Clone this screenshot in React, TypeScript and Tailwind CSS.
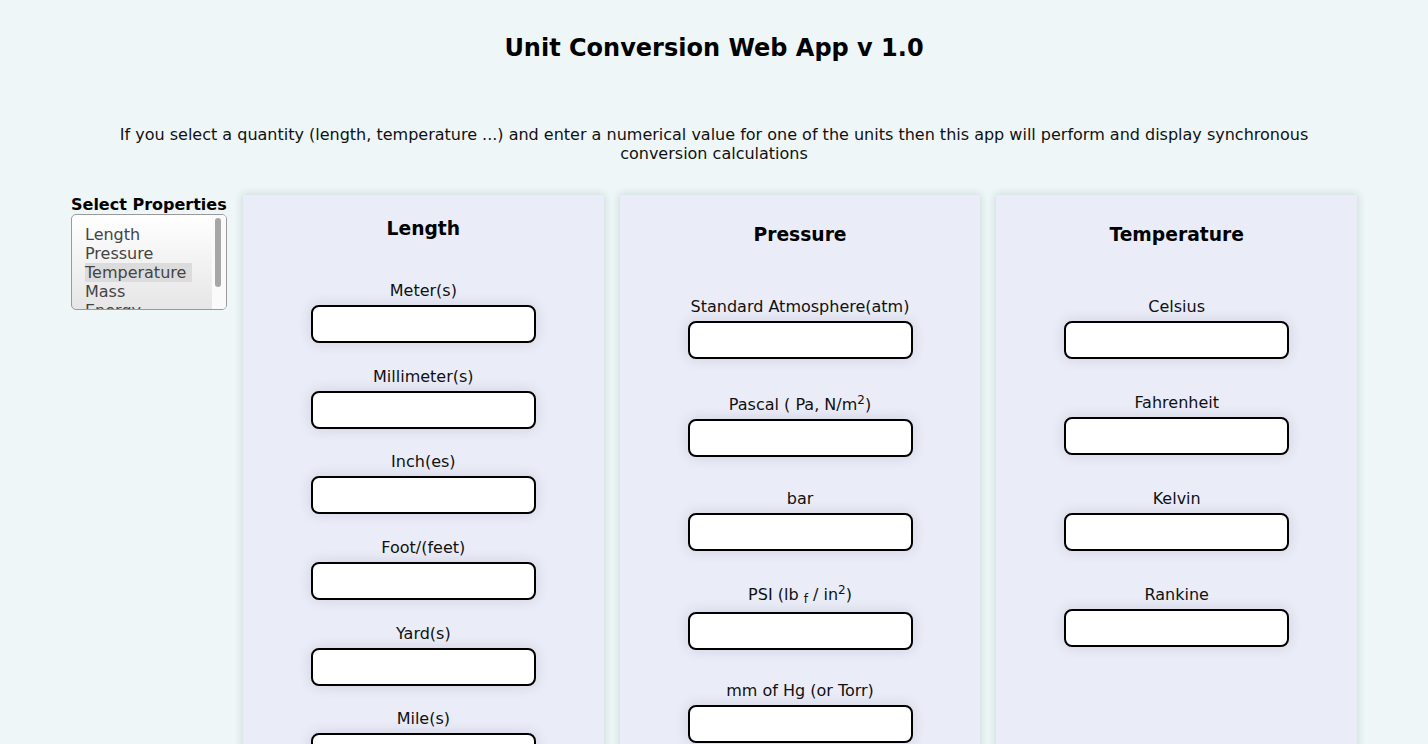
import React from "react";

const font = { fontFamily: '"DejaVu Sans", Verdana, sans-serif' };

function Field({ label, h, lp = "" }: { label: React.ReactNode; h: string; lp?: string }) {
  return (
    <div className={`flex flex-col items-center justify-center ${h}`}>
      <div className={`text-[16px] leading-[19px] text-[#111] ${lp}`}>{label}</div>
      <input
        type="text"
        className="mt-[5px] h-[38px] w-[225px] rounded-[8px] border-2 border-black bg-white shadow-[0_0_14px_rgba(40,40,90,0.14)] outline-none"
      />
    </div>
  );
}

function Card({ title, children, titleCls, listCls }: { title: string; children: React.ReactNode; titleCls: string; listCls: string }) {
  return (
    <div className="flex-1 bg-[#eaecf7] shadow-[0_0_8px_rgba(40,90,90,0.22)] pb-[60px]">
      <h2 className={`text-center text-[18.72px] font-bold leading-[24px] text-black ${titleCls}`}>{title}</h2>
      <div className={listCls}>{children}</div>
    </div>
  );
}

export default function App() {
  const options = ["Length", "Pressure", "Temperature", "Mass", "Energy"];
  return (
    <div className="min-h-screen bg-[#eef6f7] text-black" style={font}>
      <h1 className="pt-[34px] text-center text-[24px] font-bold leading-[28px]">Unit Conversion Web App v 1.0</h1>
      <p className="mx-auto mt-[63px] w-[1230px] text-center text-[16px] leading-[19px] text-[#111]">
        If you select a quantity (length, temperature ...) and enter a numerical value for one of the units then this app will perform and display synchronous conversion calculations
      </p>
      <div className="mt-[32px] flex items-stretch gap-4 px-[71px]">
        <div className="w-[156px] shrink-0">
          <div className="text-[16px] font-bold leading-[19px] whitespace-nowrap">Select Properties</div>
          <div className="relative h-[96px] w-[156px] overflow-hidden rounded-[5px] border border-[#9a9a9a] bg-gradient-to-b from-white to-[#e6e6e6]">
            <div className="pl-[13px] pt-[10px]">
              {options.map((o) => (
                <div
                  key={o}
                  className={`w-[107px] text-[16px] leading-[19px] text-[#444] ${o === "Temperature" ? "bg-[#dcdcdc]" : ""}`}
                >
                  {o}
                </div>
              ))}
            </div>
            <div className="absolute right-0 top-0 h-full w-[14px] bg-[#fafafa]">
              <div className="absolute left-[3px] top-[3px] h-[69px] w-[6px] rounded-[3px] bg-[#a6a6a6]" />
            </div>
          </div>
        </div>
        <Card title="Length" titleCls="pt-[22px]" listCls="mt-[28.5px]">
          <Field h="h-[85.6px]" label="Meter(s)" />
          <Field h="h-[85.6px]" label="Millimeter(s)" />
          <Field h="h-[85.6px]" label="Inch(es)" />
          <Field h="h-[85.6px]" label="Foot/(feet)" />
          <Field h="h-[85.6px]" label="Yard(s)" />
          <Field h="h-[85.6px]" label="Mile(s)" />
        </Card>
        <Card title="Pressure" titleCls="pt-[28px]" listCls="mt-[33px]">
          <Field h="h-[96px]" label="Standard Atmosphere(atm)" />
          <Field h="h-[96px]" lp="pt-[4px]" label={<>Pascal ( Pa, N/m<sup>2</sup>)</>} />
          <Field h="h-[96px]" label="bar" />
          <Field h="h-[96px]" lp="pt-[3px] pb-[3px]" label={<>PSI (lb <sub>f</sub> / in<sup>2</sup>)</>} />
          <Field h="h-[96px]" label="mm of Hg (or Torr)" />
        </Card>
        <Card title="Temperature" titleCls="pt-[28px]" listCls="mt-[33px]">
          <Field h="h-[96px]" label="Celsius" />
          <Field h="h-[96px]" label="Fahrenheit" />
          <Field h="h-[96px]" label="Kelvin" />
          <Field h="h-[96px]" label="Rankine" />
        </Card>
      </div>
    </div>
  );
}
